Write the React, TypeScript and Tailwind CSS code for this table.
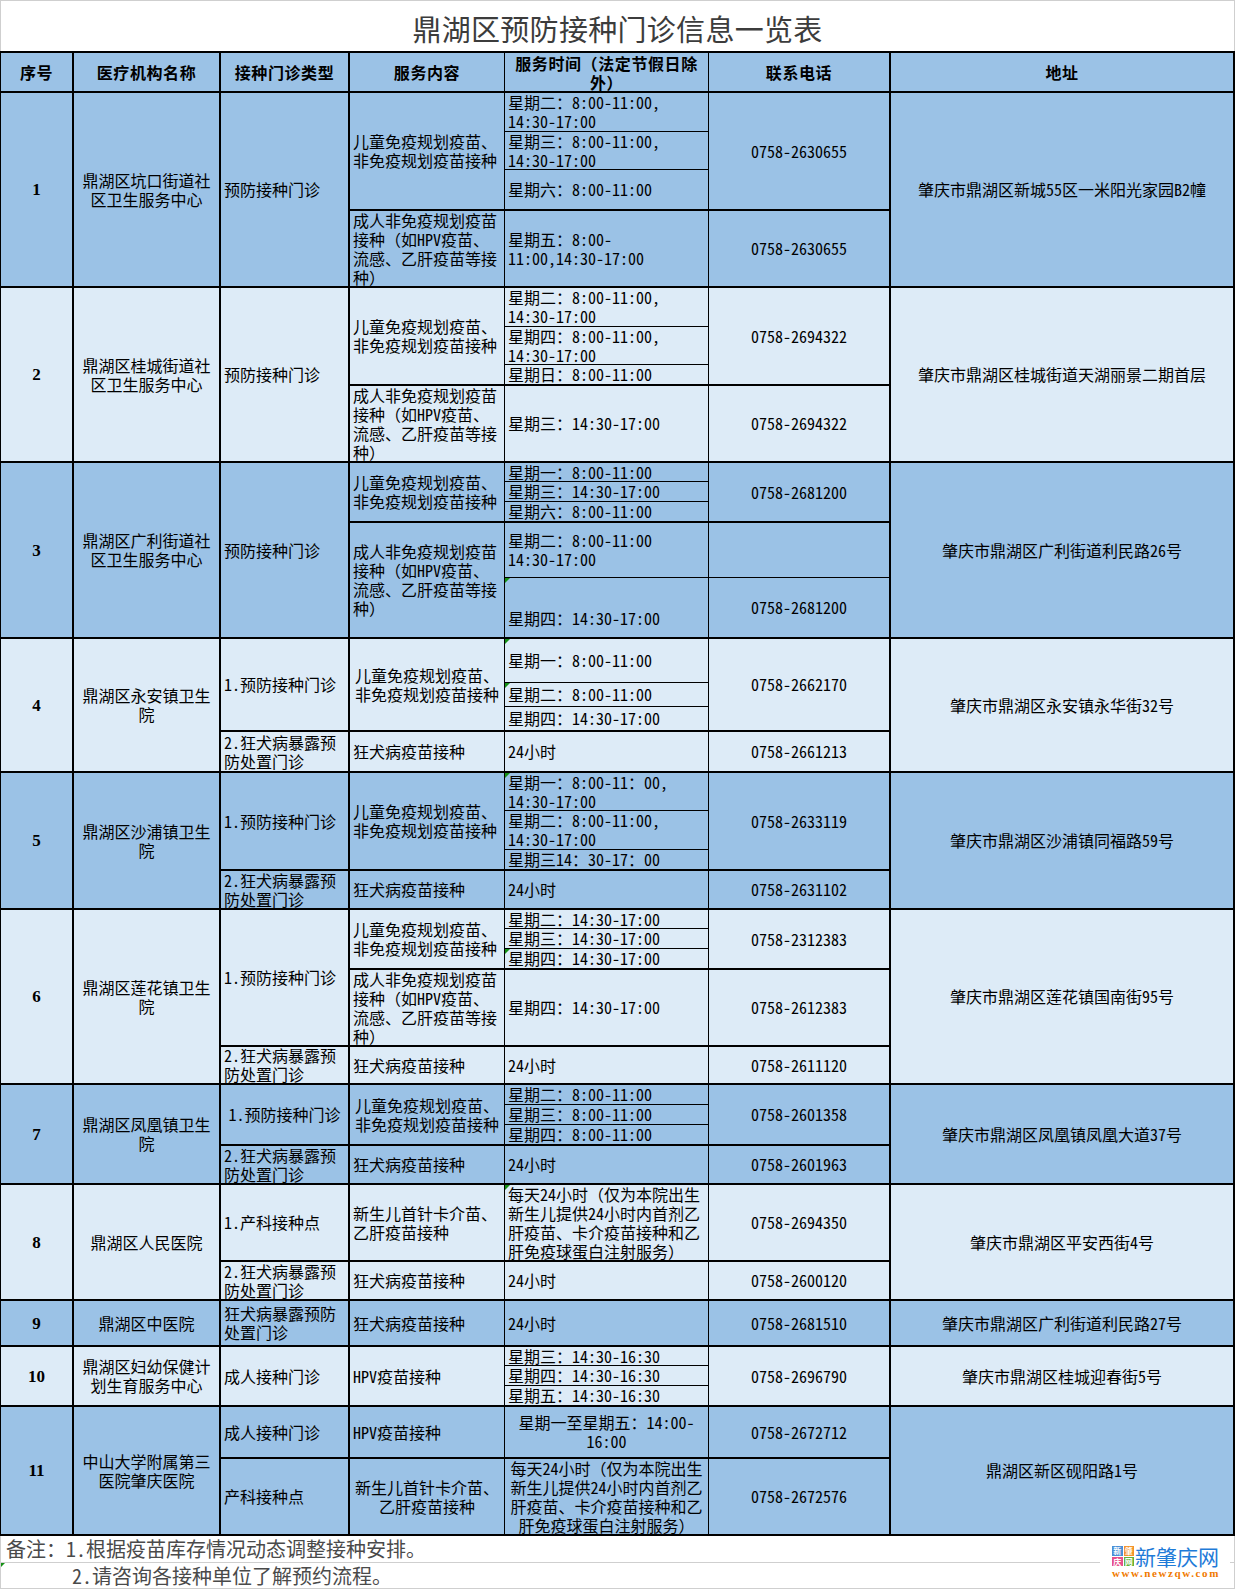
import React from 'react';

type Cell = { h: number; lines: string[]; c?: boolean; b?: boolean; thin?: boolean; tri?: boolean };
type Row = {
  h: number;
  dark: boolean;
  no: string;
  name: string[];
  type: Cell[];
  content: Cell[];
  time: Cell[];
  phone: Cell[];
  addr: string[];
};

const H: Record<number, string> = {
  20: 'h-[20px]',
  21: 'h-[21px]',
  24: 'h-[24px]',
  38: 'h-[38px]',
  39: 'h-[39px]',
  40: 'h-[40px]',
  41: 'h-[41px]',
  45: 'h-[45px]',
  46: 'h-[46px]',
  52: 'h-[52px]',
  56: 'h-[56px]',
  60: 'h-[60px]',
  61: 'h-[61px]',
  77: 'h-[77px]',
  93: 'h-[93px]',
  98: 'h-[98px]',
  100: 'h-[100px]',
  116: 'h-[116px]',
  118: 'h-[118px]',
  129: 'h-[129px]',
  134: 'h-[134px]',
  137: 'h-[137px]',
  175: 'h-[175px]',
  176: 'h-[176px]',
  195: 'h-[195px]',
};

const CW = [
  'w-[72px] border-l border-black',
  'w-[147px] border-l-2 border-black',
  'w-[129px] border-l-2 border-black',
  'w-[156px] border-l-2 border-black',
  'w-[204px] border-l border-black',
  'w-[181px] border-l border-black',
  'w-[346px] border-l-2 border-r-2 border-black',
];

const KID = ['儿童免疫规划疫苗、', '非免疫规划疫苗接种'];
const ADULT = ['成人非免疫规划疫苗', '接种（如HPV疫苗、', '流感、乙肝疫苗等接', '种）'];
const RABIES_T = ['2.狂犬病暴露预', '防处置门诊'];
const RABIES_C = ['狂犬病疫苗接种'];
const NEWBORN = ['新生儿首针卡介苗、', '乙肝疫苗接种'];
const DAILY = ['每天24小时（仅为本院出生', '新生儿提供24小时内首剂乙', '肝疫苗、卡介疫苗接种和乙', '肝免疫球蛋白注射服务）'];

const ROWS: Row[] = [
  {
    h: 195,
    dark: true,
    no: '1',
    name: ['鼎湖区坑口街道社', '区卫生服务中心'],
    type: [{ h: 195, lines: ['预防接种门诊'] }],
    content: [
      { h: 118, lines: KID },
      { h: 77, lines: ADULT },
    ],
    time: [
      { h: 40, lines: ['星期二：8:00-11:00,', '14:30-17:00'] },
      { h: 38, thin: true, lines: ['星期三：8:00-11:00,', '14:30-17:00'] },
      { h: 40, thin: true, lines: ['星期六：8:00-11:00'] },
      { h: 77, lines: ['星期五：8:00-', '11:00,14:30-17:00'] },
    ],
    phone: [
      { h: 118, lines: ['0758-2630655'], c: true },
      { h: 77, lines: ['0758-2630655'], c: true },
    ],
    addr: ['肇庆市鼎湖区新城55区一米阳光家园B2幢'],
  },
  {
    h: 175,
    dark: false,
    no: '2',
    name: ['鼎湖区桂城街道社', '区卫生服务中心'],
    type: [{ h: 175, lines: ['预防接种门诊'] }],
    content: [
      { h: 98, lines: KID },
      { h: 77, lines: ADULT },
    ],
    time: [
      { h: 40, lines: ['星期二：8:00-11:00,', '14:30-17:00'] },
      { h: 38, thin: true, lines: ['星期四：8:00-11:00,', '14:30-17:00'] },
      { h: 20, thin: true, lines: ['星期日：8:00-11:00'] },
      { h: 77, lines: ['星期三：14:30-17:00'] },
    ],
    phone: [
      { h: 98, lines: ['0758-2694322'], c: true },
      { h: 77, lines: ['0758-2694322'], c: true },
    ],
    addr: ['肇庆市鼎湖区桂城街道天湖丽景二期首层'],
  },
  {
    h: 176,
    dark: true,
    no: '3',
    name: ['鼎湖区广利街道社', '区卫生服务中心'],
    type: [{ h: 176, lines: ['预防接种门诊'] }],
    content: [
      { h: 60, lines: KID },
      { h: 116, lines: ADULT },
    ],
    time: [
      { h: 20, lines: ['星期一：8:00-11:00'] },
      { h: 20, thin: true, lines: ['星期三：14:30-17:00'] },
      { h: 20, thin: true, lines: ['星期六：8:00-11:00'] },
      { h: 56, lines: ['星期二：8:00-11:00', '14:30-17:00'] },
      { h: 60, thin: true, b: true, tri: true, lines: ['星期四：14:30-17:00'] },
    ],
    phone: [
      { h: 60, lines: ['0758-2681200'], c: true },
      { h: 56, lines: [''], c: true },
      { h: 60, thin: true, lines: ['0758-2681200'], c: true },
    ],
    addr: ['肇庆市鼎湖区广利街道利民路26号'],
  },
  {
    h: 134,
    dark: false,
    no: '4',
    name: ['鼎湖区永安镇卫生', '院'],
    type: [
      { h: 93, lines: ['1.预防接种门诊'] },
      { h: 41, lines: RABIES_T },
    ],
    content: [
      { h: 93, lines: KID, c: true },
      { h: 41, lines: RABIES_C },
    ],
    time: [
      { h: 45, tri: true, lines: ['星期一：8:00-11:00'] },
      { h: 24, thin: true, tri: true, lines: ['星期二：8:00-11:00'] },
      { h: 24, thin: true, lines: ['星期四：14:30-17:00'] },
      { h: 41, lines: ['24小时'] },
    ],
    phone: [
      { h: 93, lines: ['0758-2662170'], c: true },
      { h: 41, lines: ['0758-2661213'], c: true },
    ],
    addr: ['肇庆市鼎湖区永安镇永华街32号'],
  },
  {
    h: 137,
    dark: true,
    no: '5',
    name: ['鼎湖区沙浦镇卫生', '院'],
    type: [
      { h: 98, lines: ['1.预防接种门诊'] },
      { h: 39, lines: RABIES_T },
    ],
    content: [
      { h: 98, lines: KID },
      { h: 39, lines: RABIES_C },
    ],
    time: [
      { h: 39, tri: true, lines: ['星期一：8:00-11：00,', '14:30-17:00'] },
      { h: 39, thin: true, lines: ['星期二：8:00-11:00,', '14:30-17:00'] },
      { h: 20, thin: true, lines: ['星期三14：30-17：00'] },
      { h: 39, lines: ['24小时'] },
    ],
    phone: [
      { h: 98, lines: ['0758-2633119'], c: true },
      { h: 39, lines: ['0758-2631102'], c: true },
    ],
    addr: ['肇庆市鼎湖区沙浦镇同福路59号'],
  },
  {
    h: 175,
    dark: false,
    no: '6',
    name: ['鼎湖区莲花镇卫生', '院'],
    type: [
      { h: 137, lines: ['1.预防接种门诊'] },
      { h: 38, lines: RABIES_T },
    ],
    content: [
      { h: 60, lines: KID },
      { h: 77, lines: ADULT },
      { h: 38, lines: RABIES_C },
    ],
    time: [
      { h: 20, lines: ['星期二：14:30-17:00'] },
      { h: 20, thin: true, lines: ['星期三：14:30-17:00'] },
      { h: 20, thin: true, tri: true, lines: ['星期四：14:30-17:00'] },
      { h: 77, lines: ['星期四：14:30-17:00'] },
      { h: 38, lines: ['24小时'] },
    ],
    phone: [
      { h: 60, lines: ['0758-2312383'], c: true },
      { h: 77, lines: ['0758-2612383'], c: true },
      { h: 38, lines: ['0758-2611120'], c: true },
    ],
    addr: ['肇庆市鼎湖区莲花镇国南街95号'],
  },
  {
    h: 100,
    dark: true,
    no: '7',
    name: ['鼎湖区凤凰镇卫生', '院'],
    type: [
      { h: 61, lines: ['1.预防接种门诊'], c: true },
      { h: 39, lines: RABIES_T },
    ],
    content: [
      { h: 61, lines: KID, c: true },
      { h: 39, lines: RABIES_C },
    ],
    time: [
      { h: 21, lines: ['星期二：8:00-11:00'] },
      { h: 20, thin: true, lines: ['星期三：8:00-11:00'] },
      { h: 20, thin: true, lines: ['星期四：8:00-11:00'] },
      { h: 39, lines: ['24小时'] },
    ],
    phone: [
      { h: 61, lines: ['0758-2601358'], c: true },
      { h: 39, lines: ['0758-2601963'], c: true },
    ],
    addr: ['肇庆市鼎湖区凤凰镇凤凰大道37号'],
  },
  {
    h: 116,
    dark: false,
    no: '8',
    name: ['鼎湖区人民医院'],
    type: [
      { h: 77, lines: ['1.产科接种点'] },
      { h: 39, lines: RABIES_T },
    ],
    content: [
      { h: 77, lines: NEWBORN },
      { h: 39, lines: RABIES_C },
    ],
    time: [
      { h: 77, tri: true, lines: DAILY },
      { h: 39, lines: ['24小时'] },
    ],
    phone: [
      { h: 77, lines: ['0758-2694350'], c: true },
      { h: 39, lines: ['0758-2600120'], c: true },
    ],
    addr: ['肇庆市鼎湖区平安西街4号'],
  },
  {
    h: 46,
    dark: true,
    no: '9',
    name: ['鼎湖区中医院'],
    type: [{ h: 46, lines: ['狂犬病暴露预防', '处置门诊'] }],
    content: [{ h: 46, lines: RABIES_C }],
    time: [{ h: 46, lines: ['24小时'] }],
    phone: [{ h: 46, lines: ['0758-2681510'], c: true }],
    addr: ['肇庆市鼎湖区广利街道利民路27号'],
  },
  {
    h: 60,
    dark: false,
    no: '10',
    name: ['鼎湖区妇幼保健计', '划生育服务中心'],
    type: [{ h: 60, lines: ['成人接种门诊'] }],
    content: [{ h: 60, lines: ['HPV疫苗接种'] }],
    time: [
      { h: 20, lines: ['星期三：14:30-16:30'] },
      { h: 20, thin: true, lines: ['星期四：14:30-16:30'] },
      { h: 20, thin: true, lines: ['星期五：14:30-16:30'] },
    ],
    phone: [{ h: 60, lines: ['0758-2696790'], c: true }],
    addr: ['肇庆市鼎湖区桂城迎春街5号'],
  },
  {
    h: 129,
    dark: true,
    no: '11',
    name: ['中山大学附属第三', '医院肇庆医院'],
    type: [
      { h: 52, lines: ['成人接种门诊'] },
      { h: 77, lines: ['产科接种点'] },
    ],
    content: [
      { h: 52, lines: ['HPV疫苗接种'] },
      { h: 77, lines: NEWBORN, c: true },
    ],
    time: [
      { h: 52, lines: ['星期一至星期五：14:00-', '16:00'], c: true },
      { h: 77, lines: DAILY, c: true },
    ],
    phone: [
      { h: 52, lines: ['0758-2672712'], c: true },
      { h: 77, lines: ['0758-2672576'], c: true },
    ],
    addr: ['鼎湖区新区砚阳路1号'],
  },
];

function Txt({ s }: { s: string }) {
  const parts = s.split(/([（）：])/);
  return (
    <>
      {parts.map((p, i) =>
        p === '（' || p === '）' || p === '：' ? (
          <span key={i} className="[font-feature-settings:normal]">
            {p}
          </span>
        ) : (
          <React.Fragment key={i}>{p}</React.Fragment>
        ),
      )}
    </>
  );
}

function Box({ cell, first }: { cell: Cell; first: boolean }) {
  const top = first ? 'border-t-2' : cell.thin ? 'border-t' : 'border-t-2';
  const v = cell.b ? 'items-end pb-[9px]' : 'items-center';
  const hz = cell.c ? 'justify-center text-center' : 'justify-start text-left';
  return (
    <div className={`relative flex shrink-0 border-black px-[3px] ${H[cell.h]} ${top} ${v} ${hz}`}>
      {cell.tri && (
        <span className="absolute left-0 top-0 h-0 w-0 border-r-[5px] border-t-[5px] border-r-transparent border-t-[#159015]" />
      )}
      <div>
        {cell.lines.map((l, i) => (
          <span key={i} className="block whitespace-nowrap">
            <Txt s={l} />
          </span>
        ))}
      </div>
    </div>
  );
}

function Col({ cells, idx }: { cells: Cell[]; idx: number }) {
  return (
    <div className={`flex shrink-0 flex-col ${CW[idx]}`}>
      {cells.map((c, i) => (
        <Box key={i} cell={c} first={i === 0} />
      ))}
    </div>
  );
}

function TableRow({ r }: { r: Row }) {
  return (
    <div className={`flex ${H[r.h]} ${r.dark ? 'bg-[#9bc2e6]' : 'bg-[#ddebf7]'}`}>
      <div className={`flex shrink-0 flex-col ${CW[0]}`}>
        <div className="flex flex-1 items-center justify-center border-t-2 border-black font-['Liberation_Serif',serif] text-[17px] font-bold">
          {r.no}
        </div>
      </div>
      <Col idx={1} cells={[{ h: r.h, lines: r.name, c: true }]} />
      <Col idx={2} cells={r.type} />
      <Col idx={3} cells={r.content} />
      <Col idx={4} cells={r.time} />
      <Col idx={5} cells={r.phone} />
      <Col idx={6} cells={[{ h: r.h, lines: r.addr, c: true }]} />
    </div>
  );
}

function Header() {
  const heads: string[][] = [
    ['序号'],
    ['医疗机构名称'],
    ['接种门诊类型'],
    ['服务内容'],
    ['服务时间（法定节假日除', '外）'],
    ['联系电话'],
    ['地址'],
  ];
  return (
    <div className="flex h-[40px] bg-[#9bc2e6] text-[16px] font-bold tracking-[0.6px]">
      {heads.map((h, i) => (
        <div key={i} className={`flex shrink-0 flex-col ${CW[i]}`}>
          <div className="flex flex-1 items-center justify-center border-t-2 border-black pt-[1px] text-center">
            <div>
              {h.map((l, j) => (
                <span key={j} className="block whitespace-nowrap">
                  <Txt s={l} />
                </span>
              ))}
            </div>
          </div>
        </div>
      ))}
    </div>
  );
}

function Logo() {
  return (
    <div className="absolute right-[5px] top-[7px] flex h-[40px] w-[130px] flex-col items-start bg-white pl-[12px] pt-[3px]">
      <div className="flex items-center">
        <div className="grid h-[20px] w-[22px] grid-cols-2 grid-rows-2 gap-[1px] text-[8px] leading-[9px] font-bold text-white">
          <span className="flex items-center justify-center bg-[#4b8fd6]">新</span>
          <span className="flex items-center justify-center bg-[#f4932a]">肇</span>
          <span className="flex items-center justify-center bg-[#e6508c]">庆</span>
          <span className="flex items-center justify-center bg-[#62b33a]">网</span>
        </div>
        <span className="ml-[1px] whitespace-nowrap text-[21px] leading-[20px] text-[#1f7bd8]">新肇庆网</span>
      </div>
      <span className="mt-[2px] whitespace-nowrap font-['Liberation_Serif',serif] text-[11px] leading-[10px] font-bold tracking-[1.6px] text-[#f07a00]">
        www.newzqw.com
      </span>
    </div>
  );
}

export default function App() {
  return (
    <div className="w-[1235px] bg-white font-['Noto_Sans_CJK_SC',sans-serif] text-[16px] leading-[19px] text-black [font-feature-settings:'hwid']">
      <div className="flex h-[51px] items-center justify-center border-x border-t border-[#cfcfcf] pt-[3px] text-[29px] leading-[34px] text-[#3c3c3c] tracking-[0.3px] [font-feature-settings:normal]">
        鼎湖区预防接种门诊信息一览表
      </div>
      <div className="border-b-2 border-black">
        <Header />
        {ROWS.map((r, i) => (
          <TableRow key={i} r={r} />
        ))}
      </div>
      <div className="relative text-[20px] leading-[24px] text-[#4a4a4a]">
        <div className="flex h-[27px] items-center border-x border-b border-[#cfcfcf] pl-[5px]">
          <Txt s="备注：1.根据疫苗库存情况动态调整接种安排。" />
        </div>
        <div className="relative flex h-[26px] items-center border-x border-b border-[#cfcfcf] pl-[71px]">
          <span className="absolute left-0 top-0 h-0 w-0 border-r-[4px] border-t-[4px] border-r-transparent border-t-[#159015]" />
          2.请咨询各接种单位了解预约流程。
        </div>
        <Logo />
      </div>
    </div>
  );
}
